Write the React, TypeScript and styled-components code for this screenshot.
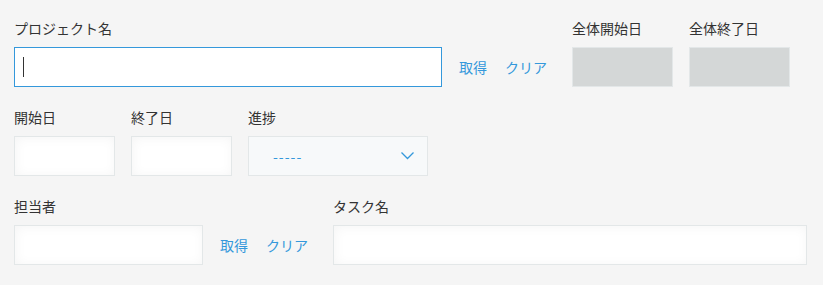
import React, { FC } from 'react';
import styled, { createGlobalStyle } from 'styled-components';

const GlobalStyle = createGlobalStyle`
  html, body {
    margin: 0;
    padding: 0;
    background: #f5f5f5;
  }
  body {
    font-family: "Noto Sans CJK JP", "Noto Sans", "Liberation Sans", sans-serif;
    font-size: 14px;
    color: #333;
  }
`;

const SForm = styled.div`
  display: flex;
  flex-direction: column;
  gap: 20px;
  padding: 18px 0 0 14px;
  width: 823px;
  height: 285px;
  box-sizing: border-box;
`;

const SRow = styled.div`
  display: flex;
  align-items: flex-end;
`;

const SField = styled.div<{ $gapRight?: number }>`
  display: flex;
  flex-direction: column;
  margin-right: ${(p) => p.$gapRight ?? 16}px;
`;

const SLabel = styled.label`
  display: block;
  height: 20px;
  line-height: 20px;
  margin-bottom: 9px;
  color: #333;
  white-space: nowrap;
`;

const SInput = styled.input<{ $width: number }>`
  width: ${(p) => p.$width}px;
  height: 40px;
  box-sizing: border-box;
  padding: 0 8px;
  border: 1px solid #e3e7e8;
  background: #fff;
  box-shadow: 1px 1px 12px #f5f5f5 inset;
  font: inherit;
  outline: none;
`;

const SFocused = styled.div<{ $width: number }>`
  display: flex;
  align-items: center;
  width: ${(p) => p.$width}px;
  height: 40px;
  box-sizing: border-box;
  padding: 0 8px;
  border: 1px solid #3498db;
  background: #fff;
`;

const SCaret = styled.span`
  display: block;
  width: 1px;
  height: 20px;
  background: #333;
`;

const SReadonly = styled.div`
  width: 101px;
  height: 40px;
  box-sizing: border-box;
  border: 1px solid #e3e7e8;
  background: #d4d7d7;
`;

const SSelect = styled.div`
  display: flex;
  align-items: center;
  justify-content: space-between;
  width: 180px;
  height: 40px;
  box-sizing: border-box;
  padding: 0 13px 0 24px;
  border: 1px solid #e3e7e8;
  background: #f7f9fa;
  color: #3498db;
  letter-spacing: 1px;
  cursor: pointer;
`;

const SActions = styled.div<{ $gapRight: number }>`
  display: flex;
  gap: 18px;
  height: 40px;
  align-items: center;
  margin: 0 ${(p) => p.$gapRight}px 0 1px;
`;

const SLink = styled.a`
  color: #3498db;
  cursor: pointer;
  white-space: nowrap;
`;

const Actions: FC<{ gapRight: number }> = ({ gapRight }) => (
  <SActions $gapRight={gapRight}>
    <SLink>取得</SLink>
    <SLink>クリア</SLink>
  </SActions>
);

const App: FC = () => (
  <>
    <GlobalStyle />
    <SForm>
      <SRow>
        <SField>
          <SLabel>プロジェクト名</SLabel>
          <SFocused $width={428}>
            <SCaret />
          </SFocused>
        </SField>
        <Actions gapRight={25} />
        <SField>
          <SLabel>全体開始日</SLabel>
          <SReadonly />
        </SField>
        <SField>
          <SLabel>全体終了日</SLabel>
          <SReadonly />
        </SField>
      </SRow>
      <SRow>
        <SField>
          <SLabel>開始日</SLabel>
          <SInput $width={101} />
        </SField>
        <SField>
          <SLabel>終了日</SLabel>
          <SInput $width={101} />
        </SField>
        <SField>
          <SLabel>進捗</SLabel>
          <SSelect>
            <span>-----</span>
            <svg width="13" height="8" viewBox="0 0 13 8">
              <polyline points="0.5,0.5 6.5,6.5 12.5,0.5" fill="none" stroke="#3498db" strokeWidth="1.3" />
            </svg>
          </SSelect>
        </SField>
      </SRow>
      <SRow>
        <SField>
          <SLabel>担当者</SLabel>
          <SInput $width={189} />
        </SField>
        <Actions gapRight={25} />
        <SField>
          <SLabel>タスク名</SLabel>
          <SInput $width={474} />
        </SField>
      </SRow>
    </SForm>
  </>
);

export default App;
